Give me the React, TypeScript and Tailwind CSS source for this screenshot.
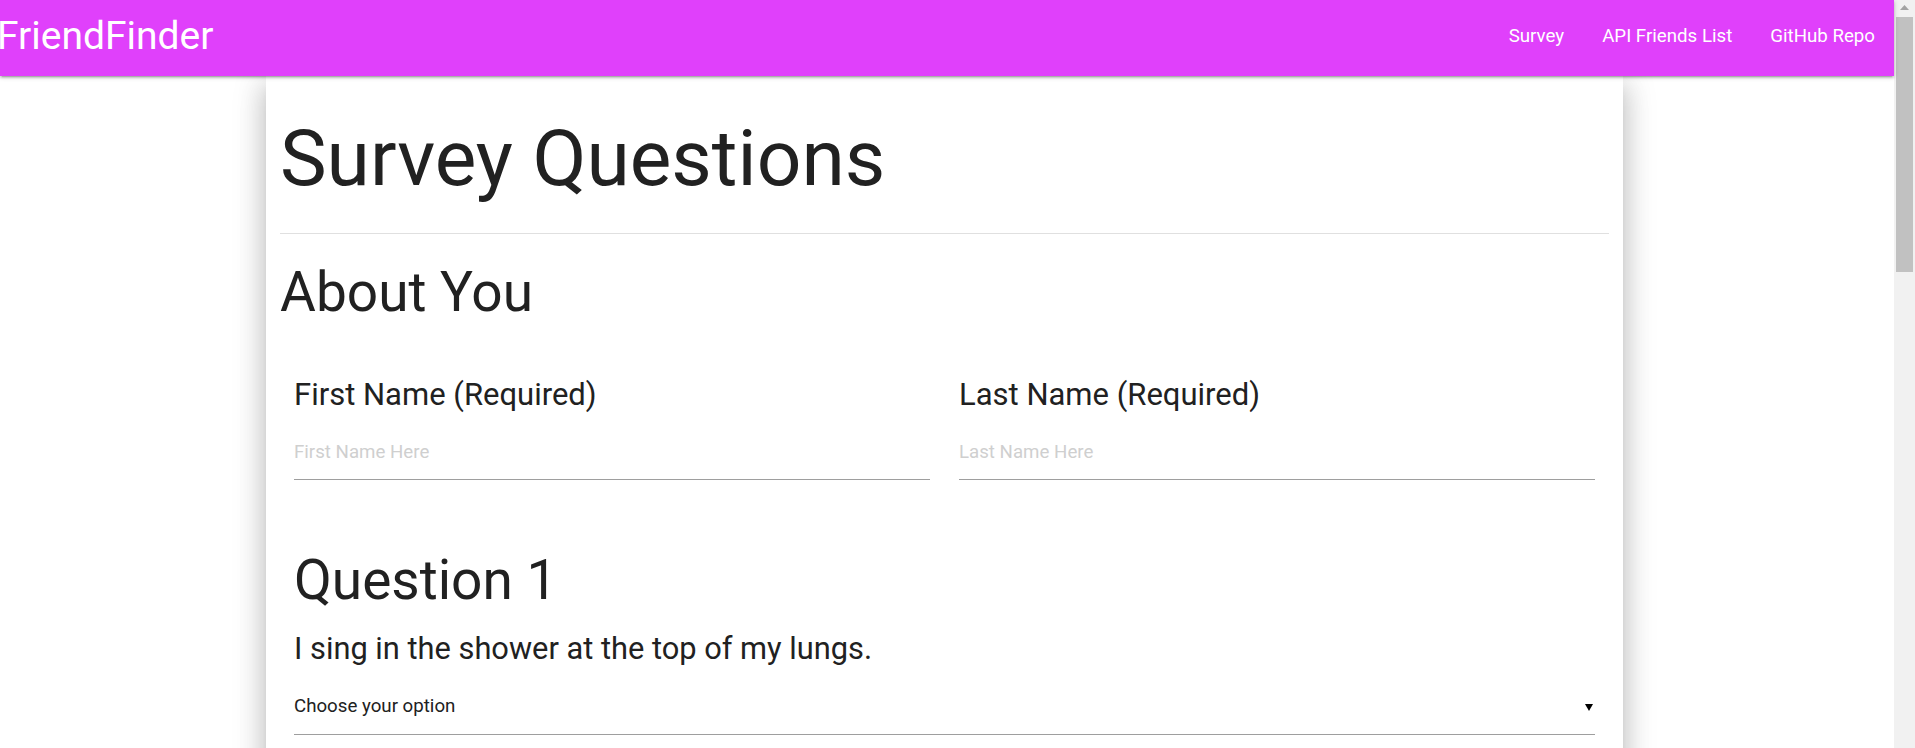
import React from 'react';

const navLinks = ['Survey', 'API Friends List', 'GitHub Repo'];

const NameField = ({ label, placeholder }: { label: string; placeholder: string }) => (
  <div>
    <h5 className="text-[31px] leading-[33px] text-[#212121]">{label}</h5>
    <input
      type="text"
      placeholder={placeholder}
      className="mt-[13px] block w-full h-[56px] border-b border-[#9e9e9e] bg-transparent text-[18.7px] text-[#212121] outline-none placeholder:text-[#cfcfcf]"
    />
  </div>
);

const Scrollbar = () => (
  <div className="w-[21px] h-full bg-[#f1f1f1] flex flex-col items-center">
    <svg width="9" height="5" viewBox="0 0 9 5" className="mt-[5px]">
      <polygon points="4.5,0 9,5 0,5" fill="#a3a3a3" />
    </svg>
    <div className="mt-[7px] w-[17px] h-[255px] bg-[#c1c1c1]" />
  </div>
);

export default function App() {
  return (
    <div className="flex h-[748px] w-full overflow-hidden bg-white" style={{ fontFamily: 'Roboto, "Noto Sans", sans-serif' }}>
      <div className="flex-1 min-w-0">
        <nav className="relative z-10 h-[76px] bg-[#e040fb] flex items-start justify-between text-white shadow-[0_2px_2px_0_rgba(0,0,0,0.14),0_3px_1px_-2px_rgba(0,0,0,0.12),0_1px_5px_0_rgba(0,0,0,0.2)]">
          <a className="-ml-[3px] text-[39px] leading-[72px] whitespace-nowrap">FriendFinder</a>
          <ul className="flex">
            {navLinks.map((link) => (
              <li key={link}>
                <a className="block px-[19px] text-[18.7px] leading-[72px] whitespace-nowrap">{link}</a>
              </li>
            ))}
          </ul>
        </nav>

        <div className="ml-[266px] w-[1357px] bg-white px-[14px] pt-[39px] pb-10 shadow-[0_16px_24px_2px_rgba(0,0,0,0.14),0_6px_30px_5px_rgba(0,0,0,0.12),0_8px_10px_-7px_rgba(0,0,0,0.2)]">
          <h1 className="text-[78.5px] leading-[86px] text-[#212121]">Survey Questions</h1>
          <div className="mt-[32px] h-px bg-[#e0e0e0]" />
          <h3 className="mt-[29px] text-[55px] leading-[58px] text-[#212121]">About You</h3>

          <div className="mt-[57px] grid grid-cols-2 gap-x-[29px] px-[14px]">
            <NameField label="First Name (Required)" placeholder="First Name Here" />
            <NameField label="Last Name (Required)" placeholder="Last Name Here" />
          </div>

          <div className="mt-[71px] px-[14px]">
            <h3 className="text-[55px] leading-[58px] text-[#212121]">Question 1</h3>
            <h5 className="mt-[23px] text-[30.8px] leading-[33px] text-[#212121]">
              I sing in the shower at the top of my lungs.
            </h5>
            <div className="mt-[14px] h-[56px] border-b border-[#9e9e9e] flex items-center justify-between text-[18.7px] text-[#212121]">
              <span>Choose your option</span>
              <svg width="8" height="8" viewBox="0 0 8 8" className="mr-[2px]">
                <polygon points="0,1 8,1 4,8" fill="#000" />
              </svg>
            </div>
          </div>
        </div>
      </div>
      <Scrollbar />
    </div>
  );
}
